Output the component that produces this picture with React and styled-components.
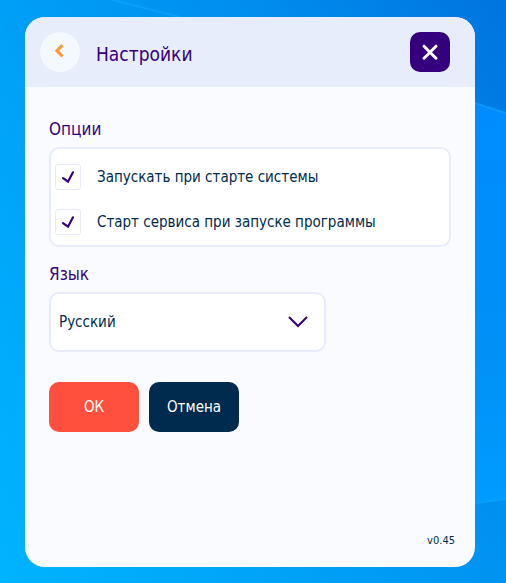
import React, { useState } from 'react';
import styled, { createGlobalStyle } from 'styled-components';

const colors = {
	purple: '#35007D',
	navy: '#002B4E',
	red: '#FF4F3D',
	orange: '#FF9933',
	header: '#E8EDFB',
	border: '#E8EBFC',
	panel: '#FAFBFF',
	white: '#FFFFFF'
}

const GlobalStyle = createGlobalStyle`
	*{
		box-sizing: border-box;
		margin: 0;
	}
	body{
		font-family: "DejaVu Sans Condensed", "Noto Sans", sans-serif;
		color: ${colors.navy};
	}
	button, select{
		font: inherit;
		cursor: pointer;
	}
`

const Desktop = styled.div`
	position: relative;
	display: flex;
	min-height: 100vh;
	padding: 17px 31px 16px 25px;
	background: linear-gradient(60deg, #00B4FF 0%, #00A2F8 35%, #008DEE 70%, #0074DF 100%);
`

const Wallpaper = styled.svg`
	position: absolute;
	inset: 0;
	width: 100%;
	height: 100%;
`

const Window = styled.main`
	position: relative;
	display: flex;
	flex: 1;
	flex-direction: column;
	overflow: hidden;
	border-radius: 20px;
	background: ${colors.panel};
`

const Header = styled.header`
	display: flex;
	align-items: center;
	gap: 16px;
	padding: 15px 25px 15px 15px;
	background: ${colors.header};
`

const Title = styled.h1`
	flex: 1;
	padding-top: 4px;
	color: ${colors.purple};
	font-size: 19px;
	font-weight: 400;
	line-height: 28px;
`

const IconButton = styled.button`
	display: flex;
	align-items: center;
	justify-content: center;
	width: 40px;
	height: 40px;
	padding: 0;
	border: none;
	border-radius: ${({ $round }) => $round ? '50%' : '10px'};
	background: ${({ $round }) => $round ? '#F4F8FF' : colors.purple};
`

const Form = styled.form`
	display: flex;
	flex: 1;
	flex-direction: column;
	padding: 30px 24px 16px;
`

const Group = styled.fieldset`
	min-width: 0;
	margin-bottom: 15px;
	padding: 0;
	border: none;
`

const groupTitle = `
	display: block;
	padding: 0;
	color: ${colors.purple};
	font-size: 17px;
	line-height: 24px;
`

const Legend = styled.legend`
	${groupTitle}
	margin-bottom: 6px;
`

const Label = styled.label`
	${groupTitle}
	margin-bottom: 6px;
`

const Options = styled.div`
	display: grid;
	gap: 19px;
	padding: 15px 4px 10px;
	border: 2px solid ${colors.border};
	border-radius: 10px;
	background: ${colors.white};
`

const Option = styled.label`
	display: flex;
	align-items: center;
	gap: 16px;
	font-size: 15px;
	line-height: 26px;
	cursor: pointer;
`

const CheckWrapper = styled.span`
	display: grid;
	width: 26px;
	height: 26px;
	input, svg{
		grid-area: 1 / 1;
	}
	input{
		appearance: none;
		width: 26px;
		height: 26px;
		margin: 0;
		border: 1px solid ${colors.border};
		border-radius: 3px;
		background: ${colors.white};
	}
	svg{
		visibility: hidden;
		pointer-events: none;
	}
	input:checked + svg{
		visibility: visible;
	}
`

const SelectWrapper = styled.div`
	display: grid;
	align-items: center;
	width: 69%;
	margin-bottom: 30px;
	select, svg{
		grid-area: 1 / 1;
	}
	select{
		appearance: none;
		width: 100%;
		height: 60px;
		padding: 0 48px 0 8px;
		border: 2px solid ${colors.border};
		border-radius: 10px;
		background: ${colors.white};
		color: ${colors.navy};
		font-size: 15px;
	}
	svg{
		justify-self: end;
		margin-right: 18px;
		pointer-events: none;
	}
`

const Actions = styled.div`
	display: flex;
	gap: 10px;
`

const Button = styled.button`
	width: 90px;
	height: 50px;
	padding: 0;
	border: none;
	border-radius: 10px;
	background: ${({ $primary }) => $primary ? colors.red : colors.navy};
	color: ${colors.white};
	font-size: 15px;
`

const Version = styled.p`
	font-size: 11px;
	line-height: 20px;
	text-align: right;
`

const Footer = styled.footer`
	padding: 0 20px 16px;
`

const CheckOption = ({ label, checked, onChange }) => (
	<Option>
		<CheckWrapper>
			<input type="checkbox" checked={checked} onChange={onChange} />
			<svg width="26" height="26" viewBox="0 0 26 26" fill="none">
				<path d="M8 14.2L13 17.7L18 8.3" stroke={colors.purple} strokeWidth="2.2" strokeLinecap="round" />
			</svg>
		</CheckWrapper>
		{label}
	</Option>
)

const App = () => {
	const [options, setOptions] = useState([
		{ label: "Запускать при старте системы", checked: true },
		{ label: "Старт сервиса при запуске программы", checked: true }
	])

	const toggle = (index) => setOptions(
		options.map((item, i) => i === index ? { ...item, checked: !item.checked } : item)
	)

	return (
		<Desktop>
			<GlobalStyle />
			<Wallpaper viewBox="0 0 506 583" preserveAspectRatio="none" aria-hidden="true">
				<defs>
					<linearGradient id="beam" x1="0" y1="0" x2="0" y2="1">
						<stop offset="0" stopColor="#008CFF" />
						<stop offset="0.6" stopColor="#0090F6" />
						<stop offset="1" stopColor="#009CFF" />
					</linearGradient>
				</defs>
				<path d="M440 92L506 113V499L440 508Z" fill="url(#beam)" />
				<path d="M105 -2L180 17M440 92L506 113M440 508L506 499" stroke="#0FA5FF" strokeWidth="2" opacity="0.6" />
			</Wallpaper>
			<Window>
				<Header>
					<IconButton type="button" $round aria-label="Назад">
						<svg width="40" height="40" viewBox="0 0 40 40" fill="none">
							<path d="M22.5 13L17 18.7L22.5 24.5" stroke={colors.orange} strokeWidth="3.2" />
						</svg>
					</IconButton>
					<Title>Настройки</Title>
					<IconButton type="button" aria-label="Закрыть">
						<svg width="40" height="40" viewBox="0 0 40 40" fill="none">
							<path d="M14 14.2L26 26.2M26 14.2L14 26.2" stroke={colors.white} strokeWidth="3" strokeLinecap="round" />
						</svg>
					</IconButton>
				</Header>
				<Form onSubmit={(e) => e.preventDefault()}>
					<Group>
						<Legend>Опции</Legend>
						<Options>
							{
								options.map((item, index) =>
									<CheckOption key={index} {...item} onChange={() => toggle(index)} />
								)
							}
						</Options>
					</Group>
					<Label htmlFor="language">Язык</Label>
					<SelectWrapper>
						<select id="language" defaultValue="ru">
							<option value="ru">Русский</option>
						</select>
						<svg width="20" height="12" viewBox="0 0 20 12" fill="none">
							<path d="M1 1L10 10L19 1" stroke={colors.purple} strokeWidth="2" />
						</svg>
					</SelectWrapper>
					<Actions>
						<Button type="submit" $primary>ОК</Button>
						<Button type="button">Отмена</Button>
					</Actions>
				</Form>
				<Footer>
					<Version>v0.45</Version>
				</Footer>
			</Window>
		</Desktop>
	);
}

export default App;
